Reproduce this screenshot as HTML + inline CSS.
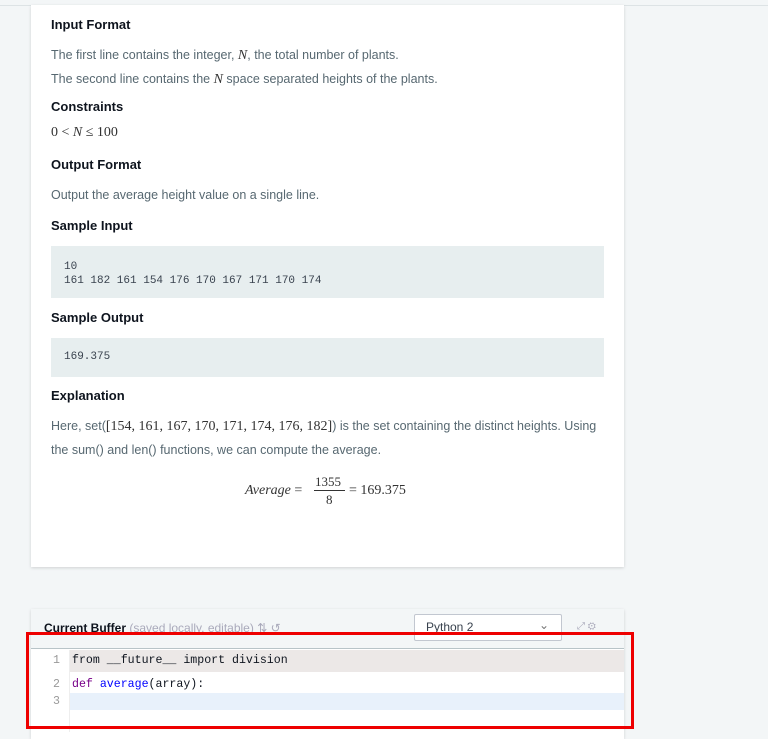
<!DOCTYPE html>
<html><head><style>
body{margin:0;width:768px;height:732px;background:#f3f6f7;position:relative;overflow:hidden;font-family:"Liberation Sans",sans-serif;color:#576871}
.a{position:absolute;white-space:nowrap}
.card{position:absolute;left:31px;top:5px;width:593px;height:562px;background:#fff;box-shadow:0 1px 3px rgba(0,0,0,.15)}
.h{font-weight:bold;color:#0e141e;font-size:13px}
.p{font-size:12.5px;color:#576871}
.m{font-family:"Liberation Serif",serif;font-size:14px;color:#333}
.code{position:absolute;left:51px;width:553px;background:#e7eeef;font-family:"Liberation Mono",monospace;font-size:11px;color:#39424e}
.cm{font-family:"Liberation Mono",monospace;font-size:11.6px;color:#0e141e}
</style></head><body>
<div class="a" style="left:0;top:5px;width:768px;height:1px;background:#dde3e5"></div>
<div class="card"></div>
<div class="a h" style="left:51px;top:17px">Input Format</div>
<div class="a p" style="left:51px;top:48px">The first line contains the integer, <i class="m">N</i>, the total number of plants.</div>
<div class="a p" style="left:51px;top:72px">The second line contains the <i class="m">N</i> space separated heights of the plants.</div>
<div class="a h" style="left:51px;top:99px">Constraints</div>
<div class="a m" style="left:51px;top:125px">0 &lt; <i>N</i> ≤ 100</div>
<div class="a h" style="left:51px;top:157px">Output Format</div>
<div class="a p" style="left:51px;top:188px">Output the average height value on a single line.</div>
<div class="a h" style="left:51px;top:218px">Sample Input</div>
<div class="code" style="top:246px;height:52px"><div style="position:absolute;left:13px;top:14px;line-height:14px">10<br>161 182 161 154 176 170 167 171 170 174</div></div>
<div class="a h" style="left:51px;top:310px">Sample Output</div>
<div class="code" style="top:338px;height:39px"><div style="position:absolute;left:13px;top:13px">169.375</div></div>
<div class="a h" style="left:51px;top:388px">Explanation</div>
<div class="a p" style="left:51px;top:419px">Here, set(<span class="m">[154, 161, 167, 170, 171, 174, 176, 182]</span>) is the set containing the distinct heights. Using</div>
<div class="a p" style="left:51px;top:443px">the sum() and len() functions, we can compute the average.</div>
<div class="a m" style="left:245px;top:483px"><i>Average</i> =</div>
<div class="a m" style="left:315px;top:474px;font-size:13px">1355</div>
<div class="a" style="left:314px;top:490px;width:31px;height:1px;background:#333"></div>
<div class="a m" style="left:326px;top:492px;font-size:13px">8</div>
<div class="a m" style="left:349px;top:483px">= 169.375</div>
<div class="a" style="left:31px;top:609px;width:593px;height:130px;background:#fff;box-shadow:0 1px 3px rgba(0,0,0,.15)"></div>
<div class="a" style="left:31px;top:609px;width:593px;height:40px;background:#f3f6f7"></div>
<div class="a" style="left:44px;top:621px;font-size:12px;color:#0e141e;font-weight:bold">Current Buffer <span style="font-weight:normal;color:#aab">(saved locally, editable)</span> <span style="color:#aab;font-weight:normal">⇅ ↺</span></div>
<div class="a" style="left:414px;top:614px;width:146px;height:25px;border:1px solid #c2c7d0;background:#fff;border-radius:2px;font-size:12px;color:#39424e"><span style="position:absolute;left:11px;top:5px">Python 2</span><span style="position:absolute;right:12px;top:3px;color:#777">⌄</span></div>
<div class="a" style="left:577px;top:621px;font-size:10px;color:#aab">⤢ ⚙</div>
<div class="a" style="left:31px;top:648px;width:593px;height:1px;background:#b8c4c8"></div>
<div class="a" style="left:69px;top:650px;width:555px;height:22px;background:#ece8e7"></div>
<div class="a" style="left:69px;top:693px;width:555px;height:17px;background:#e8f1fb"></div>
<div class="a" style="left:69px;top:650px;width:1px;height:82px;background:#eee"></div>
<div class="a cm" style="left:53px;top:654px;color:#999">1</div>
<div class="a cm" style="left:53px;top:678px;color:#999">2</div>
<div class="a cm" style="left:53px;top:695px;color:#999">3</div>
<div class="a cm" style="left:72px;top:654px">from __future__ import division</div>
<div class="a cm" style="left:72px;top:678px"><span style="color:#770088">def</span> <span style="color:#0000ff">average</span>(array):</div>
<div class="a" style="left:26px;top:632px;width:602px;height:91px;border:3px solid #ee0000"></div>
</body></html>
